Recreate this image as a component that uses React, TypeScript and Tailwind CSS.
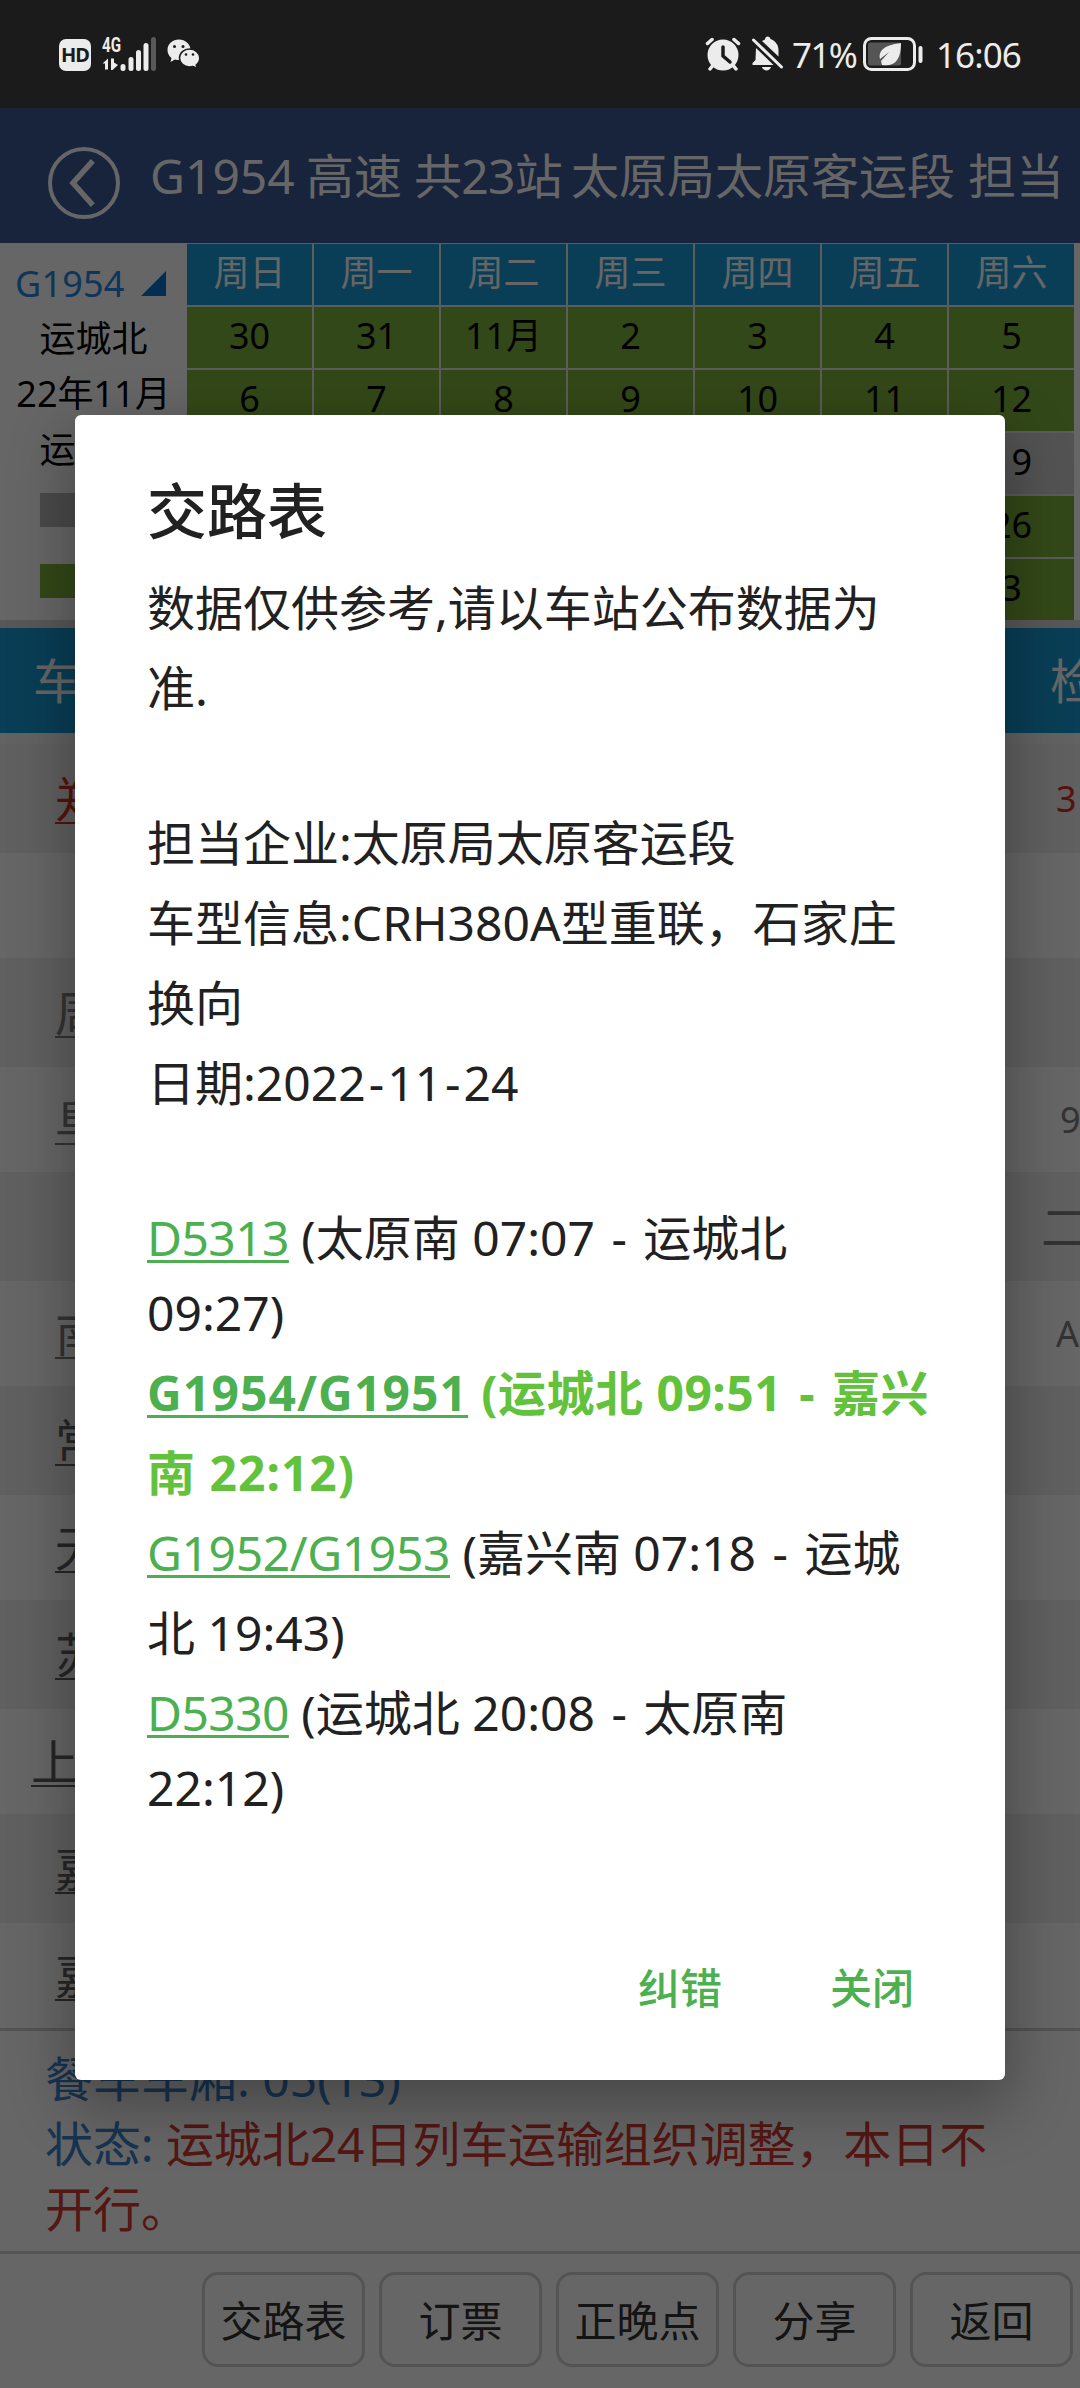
import React from "react";

type DayState = "run" | "stop";

interface Station {
  name: string;
  gate: string;
  gateClass: string;
  color: string;
}

const weekdays = ["周日", "周一", "周二", "周三", "周四", "周五", "周六"];

const days: { label: string; state: DayState }[] = [
  "30", "31", "11月", "2", "3", "4", "5",
  "6", "7", "8", "9", "10", "11", "12",
  "13", "14", "15", "16", "17", "18", "19",
  "20", "21", "22", "23", "24", "25", "26",
  "27", "28", "29", "30", "12月", "2", "3",
].map((label, i) => ({ label, state: i >= 14 && i < 21 ? "stop" : "run" }));

const stations: Station[] = [
  { name: "郑州东", gate: "3", gateClass: "pl-[94px] text-[36px]", color: "text-[#d93025]" },
  { name: "", gate: "", gateClass: "", color: "text-[#808080]" },
  { name: "周口东", gate: "", gateClass: "", color: "text-[#808080]" },
  { name: "阜阳西", gate: "9", gateClass: "pl-[98px] text-[36px]", color: "text-[#808080]" },
  { name: "", gate: "二", gateClass: "pl-[79px] text-[48px]", color: "text-[#808080]" },
  { name: "南京南", gate: "A", gateClass: "pl-[94px] text-[36px]", color: "text-[#808080]" },
  { name: "常州北", gate: "", gateClass: "", color: "text-[#606060]" },
  { name: "无锡东", gate: "", gateClass: "", color: "text-[#606060]" },
  { name: "苏州北", gate: "", gateClass: "", color: "text-[#606060]" },
  { name: "上海虹桥", gate: "", gateClass: "", color: "text-[#606060]" },
  { name: "嘉善南", gate: "", gateClass: "", color: "text-[#606060]" },
  { name: "嘉兴南", gate: "", gateClass: "", color: "text-[#606060]" },
];

const actions = ["交路表", "订票", "正晚点", "分享", "返回"];

function StatusBar() {
  return (
    <div className="relative z-20 h-[108px] bg-[#1b1b1b] text-[#ececec] flex items-center justify-between pl-[59px] pr-[60px]">
      <div className="flex items-center">
        <div className="w-[32px] h-[32px] mt-[2px] rounded-[7px] bg-[#ececec] text-[#1b1b1b] text-[20px] leading-none font-bold flex items-center justify-center tracking-[-1px]">
          HD
        </div>
        <svg className="ml-[11px]" width="56" height="36" viewBox="0 0 56 36" fill="currentColor">
          <text x="0" y="16" fontSize="21" fontWeight="bold" fontFamily="Roboto" textLength="19" lengthAdjust="spacingAndGlyphs">4G</text>
          <path d="M6 22.500v11h-3v-6H0.500zM9 22.500h3v4l4 2.500-5.500 5H9z" />
          <rect x="18.500" y="28" width="5" height="7" rx="2.500" />
          <rect x="26.500" y="21" width="5" height="14" rx="2.500" />
          <rect x="34" y="14" width="5" height="21" rx="2.500" />
          <rect x="41.500" y="7" width="5" height="28" rx="2.500" />
          <rect x="49" y="1" width="5" height="34" rx="2.500" opacity="0.300" />
        </svg>
        <svg className="ml-[9px]" width="34" height="30" viewBox="0 0 34 30" fill="currentColor">
          <path d="M12 0.500C5.500 0.500 0.500 5 0.500 11c0 3.500 1.600 6 4 8l-1 4 4.500-2.500c1.200.4 2.600.6 4 .6C18 21 23.500 17 23.500 11S18 .5 12 .5z" />
          <path d="M22.500 10C17 10 12.500 14 12.500 19s4.500 9 10 9c1.300 0 2.500-.2 3.600-.5l4 2-.9-3.500c2.200-1.700 3.600-4.200 3.600-7C32.800 14 28 10 22.500 10z" stroke="#1b1b1b" strokeWidth="1.500" />
          <circle cx="7.500" cy="7.500" r="1.500" fill="#1b1b1b" />
          <circle cx="16" cy="7.500" r="1.500" fill="#1b1b1b" />
          <circle cx="19" cy="15.500" r="1.300" fill="#1b1b1b" />
          <circle cx="26" cy="15.500" r="1.300" fill="#1b1b1b" />
        </svg>
      </div>
      <div className="flex items-center">
        <svg width="36" height="34" viewBox="0 0 36 34" fill="currentColor">
          <circle cx="18" cy="18" r="15.500" />
          <path d="M2.500 6.500 7 2.500M33.500 6.500 29 2.500M5 32l4-5M31 32l-4-5" stroke="currentColor" strokeWidth="3.500" strokeLinecap="round" />
          <path d="M18 10v9l7 6" fill="none" stroke="#1b1b1b" strokeWidth="3.500" strokeLinecap="round" strokeLinejoin="round" />
        </svg>
        <svg className="ml-[10px]" width="34" height="36" viewBox="0 0 34 36" fill="currentColor">
          <path d="M5 12 22.500 29H1.500v-2L4.500 24zM11 5l3-1.500c0-4 5-4 5.500-.5 5 2 8 6 8 11v6.500z" />
          <path d="M11 31h9c-1 4.500-8 4.500-9 0z" />
          <path d="M2.500 4 30.500 31" stroke="currentColor" strokeWidth="3" strokeLinecap="round" />
        </svg>
        <span className="ml-[7px] w-[64px] text-[35px] leading-none tracking-[-1.6px] whitespace-nowrap">71%</span>
        <svg className="ml-[7px]" width="61" height="34" viewBox="0 0 61 34">
          <rect x="1.500" y="1.500" width="50" height="31" rx="7" fill="none" stroke="#ececec" strokeWidth="3" />
          <rect x="5" y="5.500" width="33" height="23" rx="2" fill="#555" />
          <path d="M38 6C24 8 15 12 17 22l9-7-8 9 1 4c12 2 19-4 19-22z" fill="#ececec" />
          <rect x="55.500" y="9" width="4" height="17" rx="2" fill="#ececec" />
        </svg>
        <span className="ml-[12px] w-[84px] text-[35px] leading-none tracking-[-0.9px] whitespace-nowrap">16:06</span>
      </div>
    </div>
  );
}

function Header() {
  return (
    <div className="h-[135px] bg-[#3c5896] text-white flex items-center pl-[48px]">
      <div className="w-[72px] h-[72px] mt-[14px] rounded-full border-[4px] border-white flex items-center justify-center">
        <svg width="30" height="50" viewBox="0 0 30 50" fill="none" stroke="white" strokeWidth="5.500" strokeLinecap="square">
          <path d="M22 5 4 25 22 45" />
        </svg>
      </div>
      <div className="ml-[30px] flex text-[48px] leading-[60px] whitespace-nowrap">
        <span className="w-[156px]">G1954</span>
        <span className="w-[108px]">高速</span>
        <span className="w-[157px] tracking-[-0.7px]">共23站</span>
        <span className="w-[397px]">太原局太原客运段</span>
        <span>担当</span>
      </div>
    </div>
  );
}

function CalendarPanel() {
  return (
    <div className="h-[377px] flex text-[36px] text-black">
      <div className="w-[187px] pt-[13px]">
        <div className="flex items-center pl-[15px] h-[55px] text-[#2388dc]">
          <span className="w-[126px] tracking-[0.2px]">G1954</span>
          <svg width="25" height="25" viewBox="0 0 25 25">
            <path d="M25 0V25H0z" fill="#0474cc" />
          </svg>
        </div>
        <div className="h-[55px] leading-[56px] text-center">运城北</div>
        <div className="h-[56px] leading-[56px] text-center">22年11月</div>
        <div className="h-[56px] leading-[55px] text-center">运行图</div>
        <div className="ml-[40px] mt-[15px] w-[107px] h-[34px] bg-[#b8b8b8]" />
        <div className="ml-[40px] mt-[37px] w-[107px] h-[34px] bg-[#80b43c]" />
      </div>
      <div className="w-[887px] grid grid-cols-7 gap-[2px] pt-px bg-[#e4e8e0] content-start">
        {weekdays.map(day => (
          <div key={day} className="h-[61px] bg-[#189cd8] text-white leading-[58px] text-center">
            {day}
          </div>
        ))}
        {days.map((day, i) => (
          <div
            key={i}
            className={`h-[61px] leading-[58px] text-center ${day.state === "run" ? "bg-[#80b43c]" : "bg-[#cfcfcf]"}`}
          >
            {day.label}
          </div>
        ))}
      </div>
    </div>
  );
}

function StationTable() {
  return (
    <div className="text-[48px]">
      <div className="h-[8px] bg-[#dcdcdc]" />
      <div className="h-[105px] bg-[#189cd8] text-white flex items-center">
        <span className="w-[240px] pl-[33px]">车站</span>
        <span className="ml-auto w-[30px] whitespace-nowrap">检票口</span>
      </div>
      <div className="h-[11px] bg-[#f6f6f6]" />
      {stations.map((station, i) => (
        <div
          key={i}
          className={`flex items-center overflow-hidden ${station.color} ${i % 2 === 0 ? "h-[109px] bg-[#efefef]" : "h-[105px] bg-white"}`}
        >
          <span className="w-[254px] text-center underline decoration-[2px] underline-offset-[5px]">{station.name}</span>
          <span className={`ml-auto w-[118px] whitespace-nowrap ${station.gateClass}`}>{station.gate}</span>
        </div>
      ))}
    </div>
  );
}

function TrainStatus() {
  return (
    <div className="h-[223px] border-t-[3px] border-[#cfcfcf] pt-[15px] pl-[45px] text-[48px] leading-[65px] text-[#3a83cc]">
      <div>餐车车厢: 05(13)</div>
      <div className="whitespace-nowrap tracking-[-0.1px]">
        状态: <span className="text-[#d23a33]">运城北24日列车运输组织调整，本日不</span>
      </div>
      <div className="text-[#d23a33]">开行。</div>
    </div>
  );
}

function ActionBar() {
  return (
    <div className="h-[138px] border-t-[3px] border-[#d4d4d4] pt-[18px] flex justify-end gap-[14px] pr-[7px]">
      {actions.map(label => (
        <button
          key={label}
          className="w-[163px] h-[95px] rounded-[16px] border-[3px] border-[#d2d2d2] text-[42px] text-[#333] leading-none pt-[2px]"
        >
          {label}
        </button>
      ))}
    </div>
  );
}

function Train({ children, className = "" }: { children: React.ReactNode; className?: string }) {
  return (
    <a className={`text-[#4caf50] underline decoration-[3px] underline-offset-[4px] ${className}`}>{children}</a>
  );
}

function Dash() {
  return <span className="mx-[4px]">-</span>;
}

function RouteDialog() {
  return (
    <div className="absolute inset-0 z-10 bg-black/60 pt-[415px]">
      <div className="mx-auto w-[930px] h-[1665px] rounded-[6px] bg-white pl-[72px] text-[#212121] shadow-[0_22px_60px_6px_rgba(0,0,0,0.3)]">
        <h2 className="pt-[51px] text-[60px] leading-[90px] font-medium">交路表</h2>
        <div className="pt-[12px] text-[48px] leading-[80px] whitespace-nowrap">
          <p>数据仅供参考,请以车站公布数据为</p>
          <p>准.</p>
          <p className="mt-[75px]">担当企业:太原局太原客运段</p>
          <p>车型信息:CRH380A型重联，石家庄</p>
          <p>换向</p>
          <p>
            日期:2022<span className="mx-[3px]">-</span>11<span className="mx-[3px]">-</span>24
          </p>
          <p className="mt-[75px]">
            <Train className="tracking-[-0.6px]">D5313</Train> (太原南 07:07 <Dash /> 运城北
          </p>
          <p className="leading-[70px] pb-[5px]">09:27)</p>
          <p className="font-bold text-[#63c23c] tracking-[0.5px]">
            <Train className="tracking-[1.1px]">G1954/G1951</Train> (运城北 09:51 <Dash /> 嘉兴
          </p>
          <p className="font-bold text-[#63c23c] tracking-[1px]">南 22:12)</p>
          <p>
            <Train className="tracking-[-0.4px]">G1952/G1953</Train> (嘉兴南 07:18 <Dash /> 运城
          </p>
          <p>北 19:43)</p>
          <p>
            <Train className="tracking-[-0.6px]">D5330</Train> (运城北 20:08 <Dash /> 太原南
          </p>
          <p className="leading-[70px] pb-[5px]">22:12)</p>
        </div>
        <div className="mt-[130px] flex justify-end gap-[108px] pr-[91px] text-[42px] leading-[60px] font-medium text-[#4caf50]">
          <button>纠错</button>
          <button>关闭</button>
        </div>
      </div>
    </div>
  );
}

export default function App() {
  return (
    <div className="relative w-[1080px] h-[2388px] overflow-hidden bg-white font-['Noto_Sans','Noto_Sans_CJK_SC',sans-serif]">
      <StatusBar />
      <Header />
      <CalendarPanel />
      <StationTable />
      <TrainStatus />
      <ActionBar />
      <RouteDialog />
    </div>
  );
}
